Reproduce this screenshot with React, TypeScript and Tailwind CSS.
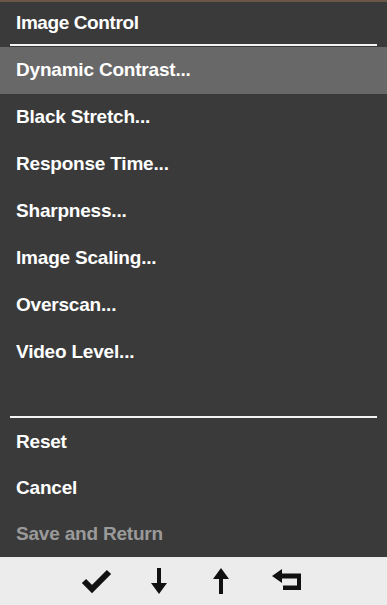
import React from "react";

const items = [
  "Dynamic Contrast...",
  "Black Stretch...",
  "Response Time...",
  "Sharpness...",
  "Image Scaling...",
  "Overscan...",
  "Video Level...",
];

const Row = ({ label, active, dim, short }: { label: string; active?: boolean; dim?: boolean; short?: boolean }) => (
  <div
    className={`${short ? "h-[46px]" : "h-[47px]"} flex items-center pl-4 text-[19px] font-bold tracking-[-0.2px] ${
      active ? "bg-[#686868]" : ""
    } ${dim ? "text-[#9a9a9a]" : "text-white"}`}
  >
    {label}
  </div>
);

export default function App() {
  return (
    <div
      className="w-[387px] h-[605px] bg-[#3a3a3a] flex flex-col overflow-hidden"
      style={{ fontFamily: '"Liberation Sans", Arial, sans-serif' }}
    >
      <div className="h-[2px] bg-[#6b5648]" />
      {/* header */}
      <div className="h-[42px] flex items-center pl-4 text-white text-[19px] font-bold tracking-[-0.4px]">
        Image Control
      </div>
      <div className="mx-[10px] h-[2px] bg-[#f4f4f4]" />
      <div className="h-[1px]" />

      {items.map((label, i) => (
        <Row key={label} label={label} active={i === 0} />
      ))}

      <div className="flex-1" />
      <div className="mx-[10px] h-[2px] bg-[#f4f4f4]" />
      <div className="h-[1px]" />
      <Row label="Reset" short />
      <Row label="Cancel" short />
      <Row label="Save and Return" dim short />

      {/* button bar */}
      <div className="h-[48px] bg-[#ececec] flex items-center pl-[77px] gap-[22px]">
        <div className="w-[40px] flex justify-center">
          <svg width="32" height="28" viewBox="0 0 32 28">
            <path d="M3 14 L11 22 L28 5" fill="none" stroke="#111" strokeWidth="6" strokeLinejoin="miter" />
          </svg>
        </div>
        <div className="w-[40px] flex justify-center">
          <svg width="18" height="28" viewBox="0 0 18 28">
            <path d="M7 1 H11 V16 H17 L9 27 L1 16 H7 Z" fill="#111" />
          </svg>
        </div>
        <div className="w-[40px] flex justify-center">
          <svg width="18" height="28" viewBox="0 0 18 28">
            <path d="M7 27 H11 V12 H17 L9 1 L1 12 H7 Z" fill="#111" />
          </svg>
        </div>
        <div className="w-[40px] flex justify-center ml-[4px]">
          <svg width="32" height="26" viewBox="0 0 32 26">
            <path d="M1 8 L11 1 V5.5 H30 V22 H12 V17.5 H26 V10.5 H11 V15 Z" fill="#111" />
          </svg>
        </div>
      </div>
    </div>
  );
}
